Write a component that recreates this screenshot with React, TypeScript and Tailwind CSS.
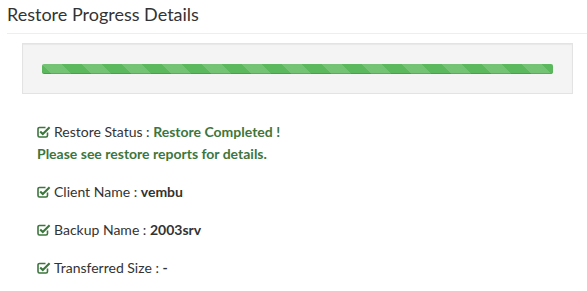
import React from "react";

const CheckIcon = () => (
  <svg
    viewBox="0 0 14 12"
    className="inline-block w-[14px] h-[12px] mr-[3px] align-[-1px]"
    fill="none"
  >
    <path
      d="M10.5 6.5V9.5A1.5 1.5 0 0 1 9 11H2.5A1.5 1.5 0 0 1 1 9.5V3A1.5 1.5 0 0 1 2.5 1.5H8.5"
      stroke="#3c763d"
      strokeWidth="1.6"
    />
    <path d="M3.2 5.4L5.8 8L12.6 1.2" stroke="#3c763d" strokeWidth="2.1" />
  </svg>
);

const rows = [
  { label: "Client Name", value: "vembu" },
  { label: "Backup Name", value: "2003srv" },
  { label: "Transferred Size", value: "-" },
];

export default function App() {
  return (
    <div
      className="w-[587px] h-[291px] bg-white overflow-hidden pl-[7px] text-[#333]"
      style={{ fontFamily: "Lato, 'Open Sans', sans-serif" }}
    >
      <h3 className="pt-[4px] pb-[9px] text-[18px] leading-[20px] font-normal border-b border-[#eee]">
        Restore Progress Details
      </h3>

      <div className="ml-[15px] mr-[14px] mt-[9px] bg-[#f4f4f4] border border-[#e3e3e3] pt-[20px] pb-[19px] px-[19px] shadow-[inset_0_1px_1px_rgba(0,0,0,0.05)]">
        <div className="h-[10px] rounded-[2px] bg-[#5cb85c] bg-[linear-gradient(45deg,rgba(255,255,255,.15)_25%,transparent_25%,transparent_50%,rgba(255,255,255,.15)_50%,rgba(255,255,255,.15)_75%,transparent_75%,transparent)] bg-[length:40px_40px] shadow-[inset_0_-1px_0_rgba(0,0,0,0.15)]" />
      </div>

      <div className="ml-[30px] mt-[27px] text-[14px] leading-[22px] flex flex-col gap-[16px]">
        <div>
          <div>
            <CheckIcon />
            Restore Status : <b className="text-[#3c763d]">Restore Completed !</b>
          </div>
          <div className="font-bold text-[#3c763d]">Please see restore reports for details.</div>
        </div>
        {rows.map((r) => (
          <div key={r.label}>
            <CheckIcon />
            {r.label} : <b>{r.value}</b>
          </div>
        ))}
      </div>
    </div>
  );
}
